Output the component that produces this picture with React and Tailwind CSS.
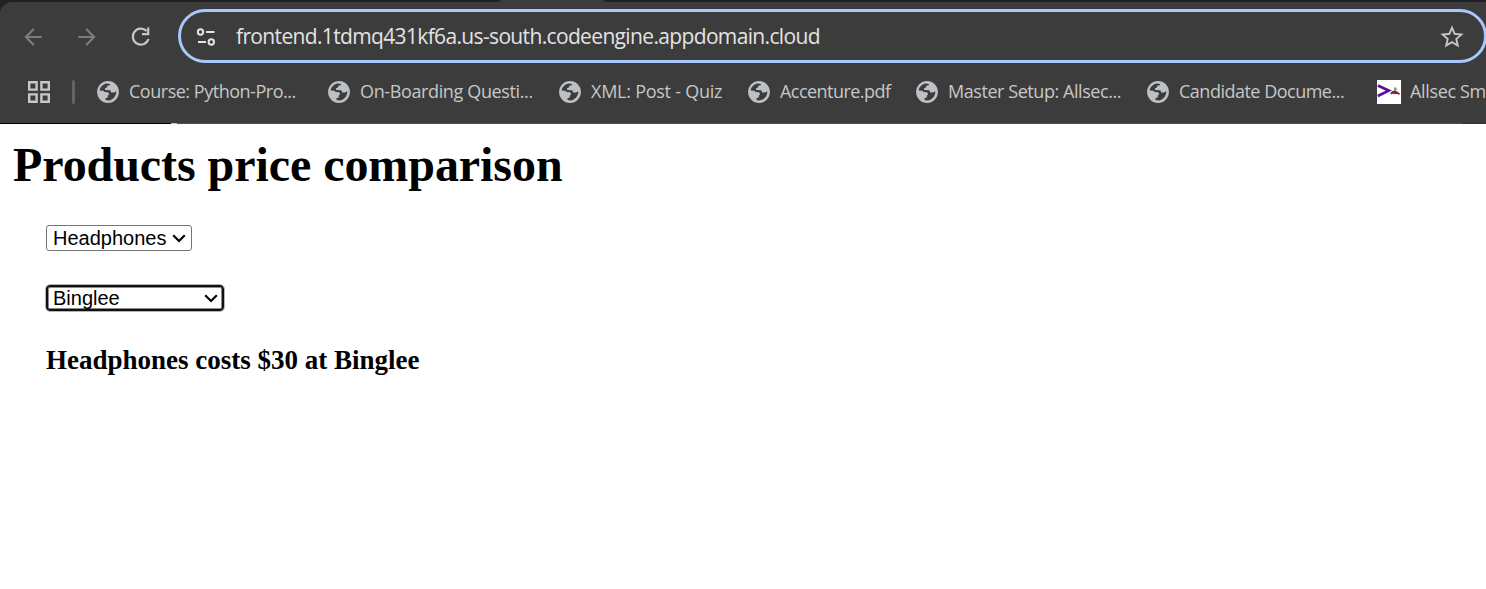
import { MdArrowBack, MdStarOutline } from "react-icons/md";

function Globe() {
  return (
    <svg className="size-[22px] shrink-0" viewBox="0 0 22 22">
      <circle cx="11" cy="11" r="10.9" fill="#bdc1c6" />
      <path
        d="M2.6 9.4C3.4 5.8 6.3 3 9.8 2.6L13 2.9L12.8 4.2L10.2 4.8L10.2 6.2L8 7.2L8.2 9L13.3 9.2L14.2 11.4L17 11.6L19.3 10.2C19.6 14.9 16 19 11.6 19.4L8.5 18.9L8.6 17L10.8 16.4L10.8 14.5L12.2 13.6L11.2 11.2L7.6 11L6.3 9.7Z"
        fill="#3c3c3c"
      />
    </svg>
  );
}

function Bookmark({ label, className, textClass }) {
  return (
    <div className={`flex h-9 shrink-0 items-center gap-[10px] ${className}`}>
      <Globe />
      <span className={`mb-[2px] whitespace-nowrap ${textClass}`}>{label}</span>
    </div>
  );
}

function Chevron() {
  return (
    <svg className="h-[9px] w-[14px] shrink-0" viewBox="0 0 14 9" fill="none">
      <path d="M1.2 1.2L7 7L12.8 1.2" stroke="#000" strokeWidth="2.1" />
    </svg>
  );
}

export default function App() {
  return (
    <div className="flex h-[589px] w-[1486px] flex-col overflow-hidden bg-white">
      <header className="flex h-[124px] shrink-0 flex-col bg-[#202120] font-['Open_Sans',sans-serif]">
        <div className="flex h-[2px] shrink-0">
          <div className="ml-[499px] h-[2px] w-[105px] rounded-t-sm bg-[#3c3c3c]" />
        </div>
        <div className="flex h-[121px] shrink-0 flex-col rounded-tl-[12px] bg-[#3c3c3c]">
          <div className="flex h-[70px] shrink-0 items-center">
            <MdArrowBack className="ml-5 size-[26px] shrink-0 text-[#7c7c7c]" />
            <MdArrowBack className="ml-[28px] size-[26px] shrink-0 rotate-180 text-[#7c7c7c]" />
            <svg className="ml-[31px] size-[20px] shrink-0" viewBox="0 0 20 20" fill="none">
              <path d="M15.6 4A8 8 0 1 0 17.5 12" stroke="#c7c7c7" strokeWidth="2.2" />
              <path d="M18.3 0.6V8.2H11V6H16.1V0.6Z" fill="#c7c7c7" />
            </svg>
            <div className="mb-[2px] ml-[27px] flex h-[54px] w-[1309px] shrink-0 items-center rounded-full border-[3px] border-[#a8c7fa] pt-[2px]">
              <svg className="ml-[15px] size-[20px] shrink-0" viewBox="0 0 20 20" fill="none" stroke="#e3e3e3" strokeWidth="2">
                <circle cx="4.5" cy="5" r="2.7" />
                <path d="M10 5H18.5M2 15H10" />
                <circle cx="15.3" cy="15" r="2.7" />
              </svg>
              <span className="mb-[2px] ml-[20px] whitespace-nowrap text-[21px] leading-7 tracking-[-0.65px] text-[#e3e3e3]">
                frontend.1tdmq431kf6a.us-south.codeengine.appdomain.cloud
              </span>
              <MdStarOutline className="ml-auto mr-[18px] size-[28px] shrink-0 text-[#c7c7c7]" />
            </div>
          </div>
          <div className="flex h-[40px] shrink-0 items-center overflow-hidden text-[18px] text-[#c7c7c7]">
            <svg className="ml-7 size-[22px] shrink-0" viewBox="0 0 22 22" fill="none" stroke="#c7c7c7" strokeWidth="2.4">
              <path d="M1.2 1.2H8.6V8.6H1.2ZM13.4 1.2H20.8V8.6H13.4ZM1.2 13.4H8.6V20.8H1.2ZM13.4 13.4H20.8V20.8H13.4Z" />
            </svg>
            <div className="ml-[22px] h-6 w-[3px] shrink-0 rounded-full bg-[#646464]" />
            <Bookmark className="ml-[22px] w-[231px]" textClass="tracking-[-0.48px]" label="Course: Python-Pro..." />
            <Bookmark className="w-[231px]" textClass="tracking-[-0.37px]" label="On-Boarding Questi..." />
            <Bookmark className="w-[189px]" textClass="tracking-[-0.25px]" label="XML: Post - Quiz" />
            <Bookmark className="w-[168px]" textClass="tracking-[-0.54px]" label="Accenture.pdf" />
            <Bookmark className="w-[231px]" textClass="tracking-[-0.44px]" label="Master Setup: Allsec..." />
            <Bookmark className="w-[230px]" textClass="tracking-[-0.5px]" label="Candidate Docume..." />
            <div className="flex shrink-0 items-center gap-[9px]">
              <svg className="size-6 shrink-0" viewBox="0 0 24 24" fill="none">
                <path d="M0 0H24V24H0Z" fill="#fff" />
                <path d="M0.8 5.5L11.8 10.6L0.8 16" stroke="#57109c" strokeWidth="2.7" />
                <path d="M14 14C15 12 16 11.5 18 11.2L22.5 14.3M16 13H21" stroke="#852631" strokeWidth="2" />
                <circle cx="18.3" cy="8.8" r="1.5" fill="#879584" />
              </svg>
              <span className="mb-[2px] whitespace-nowrap tracking-[-0.35px]">Allsec Sm</span>
            </div>
          </div>
        </div>
        <div className="flex h-px shrink-0 bg-[#505050]">
          <div className="w-[171px] bg-black" />
          <div className="w-[6px] bg-[#a8c7fa]" />
          <div className="ml-auto w-6 bg-[#343434]" />
        </div>
      </header>
      <main className="flex flex-col items-start text-black">
        <h1 className="ml-[13px] mt-[13px] whitespace-nowrap font-['Liberation_Serif',serif] text-[48px] font-bold leading-[56px] tracking-[-0.06px]">
          Products price comparison
        </h1>
        <div className="ml-[46px] mt-[32px] flex h-[26px] w-[146px] items-center justify-between rounded-[3px] border border-[#767676] pl-[6px] pr-[5px] font-['Liberation_Sans',sans-serif] text-[20px] leading-6">
          <span>Headphones</span>
          <Chevron />
        </div>
        <div className="ml-[46px] mt-[34px] flex h-[26px] w-[178px] items-center justify-between rounded-[4px] border-2 border-[#101010] pl-[5px] pr-[4px] font-['Liberation_Sans',sans-serif] text-[20px] leading-6 inset-shadow-[0_0_0_1px_#8a8a8a] outline-1 outline-[#b5b5b5]">
          <span>Binglee</span>
          <Chevron />
        </div>
        <h3 className="ml-[46px] mt-[33px] whitespace-nowrap font-['Liberation_Serif',serif] text-[27px] font-bold leading-8">
          Headphones costs $30 at Binglee
        </h3>
      </main>
    </div>
  );
}
